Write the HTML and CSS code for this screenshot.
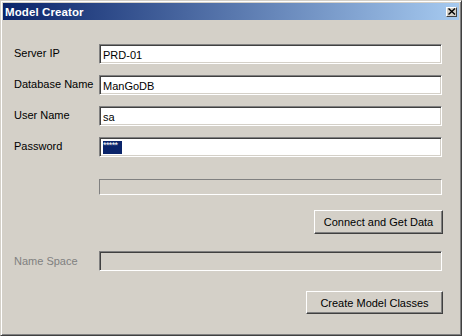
FILE: index.html
```html
<!DOCTYPE html>
<html>
<head>
<meta charset="utf-8">
<link rel="stylesheet" href="styles.css">
</head>
<body>
<div class="window">
  <div class="titlebar">
    <span class="title">Model Creator</span>
    <span class="close"><svg width="8" height="7" viewBox="0 0 8 7"><path d="M0.5 0.5 L7 6.5 M7 0.5 L0.5 6.5" stroke="#000" stroke-width="1.4"/></svg></span>
  </div>
  <div class="content">
    <div class="row"><label class="label">Server IP</label><div class="field">PRD-01</div></div>
    <div class="row"><label class="label">Database Name</label><div class="field">ManGoDB</div></div>
    <div class="row"><label class="label">User Name</label><div class="field">sa</div></div>
    <div class="row"><label class="label">Password</label><div class="field"><span class="sel">*****</span></div></div>
    <div class="progress"></div>
    <div class="btnrow btnrow-connect"><button class="btn btn-connect">Connect and Get Data</button></div>
    <div class="row row-ns"><label class="label disabled">Name Space</label><div class="field field-disabled"></div></div>
    <div class="btnrow btnrow-create"><button class="btn btn-create">Create Model Classes</button></div>
  </div>
</div>
</body>
</html>
```

FILE: styles.css
```css
html, body {
  margin: 0;
  padding: 0;
  background: #D4D0C8;
}
body {
  font-family: "Liberation Sans", Arial, sans-serif;
  font-size: 11px;
  color: #000;
}
.window {
  width: 462px;
  height: 336px;
  box-sizing: border-box;
  background: #D4D0C8;
  border-top: 1px solid #D4D0C8;
  border-left: 1px solid #D4D0C8;
  border-right: 1px solid #404040;
  border-bottom: 1px solid #404040;
  box-shadow: inset 1px 1px 0 #FFFFFF, inset -1px -1px 0 #808080;
  padding: 2px;
}
.titlebar {
  height: 17px;
  display: flex;
  align-items: center;
  justify-content: space-between;
  padding: 0 2px 0 2px;
  background: linear-gradient(to right, #0A246A, #A6CAF0);
}
.title {
  color: #fff;
  font-weight: bold;
  font-size: 11.5px;
  letter-spacing: 0.1px;
}
.close {
  width: 11px;
  height: 10px;
  box-sizing: border-box;
  background: #D4D0C8;
  border-top: 1px solid #fff;
  border-left: 1px solid #fff;
  border-right: 1px solid #404040;
  border-bottom: 1px solid #404040;
  display: flex;
  align-items: center;
  justify-content: center;
}
.close svg { display: block; }
.content {
  padding: 24px 17px 0 11px;
  display: flex;
  flex-direction: column;
}
.row {
  display: grid;
  grid-template-columns: 85px 1fr;
  align-items: center;
  height: 20px;
  margin-bottom: 11px;
}
.label {
  margin-top: -3px;
}
.label.disabled {
  color: #808080;
  margin-top: 0;
}
.field {
  height: 20px;
  box-sizing: border-box;
  background: #fff;
  border-top: 1px solid #808080;
  border-left: 1px solid #808080;
  border-right: 1px solid #fff;
  border-bottom: 1px solid #fff;
  box-shadow: inset 1px 1px 0 #404040, inset -1px -1px 0 #D4D0C8;
  padding: 2px 3px 0 3px;
  line-height: 16px;
}
.field-disabled {
  background: #D4D0C8;
}
.sel {
  display: inline-block;
  background: #0A246A;
  color: #fff;
  width: 19px;
  height: 13px;
  font-size: 9px;
  line-height: 8px;
  letter-spacing: -0.6px;
  vertical-align: top;
  margin-top: 1px;
  overflow: hidden;
  white-space: nowrap;
}
.progress {
  margin-left: 85px;
  margin-top: 11px;
  height: 16px;
  box-sizing: border-box;
  border-top: 1px solid #808080;
  border-left: 1px solid #808080;
  border-right: 1px solid #fff;
  border-bottom: 1px solid #fff;
}
.btnrow {
  display: flex;
  justify-content: flex-end;
  margin-right: -1px;
}
.btnrow-connect { margin-top: 15px; }
.row-ns { margin-top: 17px; margin-bottom: 0; }
.btnrow-create { margin-top: 20px; }
.btn {
  font-family: "Liberation Sans", Arial, sans-serif;
  font-size: 11px;
  color: #000;
  background: #D4D0C8;
  box-sizing: border-box;
  border-top: 1px solid #fff;
  border-left: 1px solid #fff;
  border-right: 1px solid #404040;
  border-bottom: 1px solid #404040;
  box-shadow: inset -1px -1px 0 #808080;
  padding: 0;
  margin: 0;
}
.btn-connect { width: 129px; height: 24px; }
.btn-create { width: 137px; height: 23px; }
```
